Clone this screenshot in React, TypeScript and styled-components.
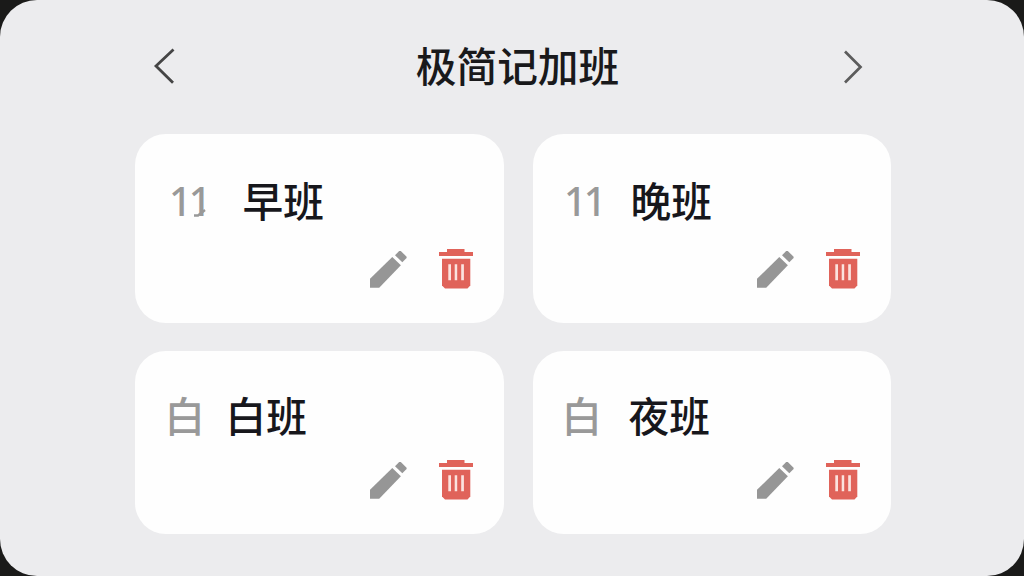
import React from "react";
import styled, { createGlobalStyle } from "styled-components";

const GlobalStyle = createGlobalStyle`
  body {
    margin: 0;
    background-color: #1a1a19;
  }
`;

const Screen = styled.div`
  box-sizing: border-box;
  width: 1024px;
  height: 576px;
  padding: 0 133px 0 135px;
  border-radius: 37px;
  background-color: #ececee;
  font-family: "Noto Sans CJK SC", sans-serif;
  overflow: hidden;
`;

const Header = styled.header`
  height: 134px;
  box-sizing: border-box;
  padding: 0 26px 0 17px;
  display: flex;
  justify-content: space-between;
  align-items: center;
`;

const Title = styled.h1`
  margin: 0 0 4px 18px;
  font-size: 40.7px;
  font-weight: 500;
  line-height: 60px;
  color: #19191b;
`;

const NavButton = styled.button<{ $color: string }>`
  display: flex;
  padding: 0;
  border: none;
  background: none;
  color: ${({ $color }) => $color};
  cursor: pointer;
`;

const Grid = styled.main`
  display: grid;
  grid-template-columns: 369px 358px;
  grid-template-rows: 188.5px 182.5px;
  gap: 28.5px 29px;
`;

const Card = styled.section`
  box-sizing: border-box;
  padding: 36px 31px 34px 31px;
  border-radius: 31px;
  background-color: #fefefe;
  display: flex;
  flex-direction: column;
  justify-content: space-between;
`;

const Shift = styled.div<{ $top: number }>`
  display: flex;
  align-items: center;
  height: 60px;
  margin-top: ${({ $top }) => $top}px;
`;

const Mark = styled.span<{ $width: number; $numeric: boolean; $indent: number }>`
  position: relative;
  width: ${({ $width, $indent }) => $width - $indent}px;
  margin-left: ${({ $indent }) => $indent}px;
  margin-top: ${({ $numeric }) => ($numeric ? 2 : 0)}px;
  flex-shrink: 0;
  white-space: nowrap;
  font-family: ${({ $numeric }) =>
    $numeric ? '"Noto Sans", sans-serif' : '"Noto Sans CJK SC", sans-serif'};
  font-size: ${({ $numeric }) => ($numeric ? 39.5 : 40.5)}px;
  font-weight: 500;
  letter-spacing: ${({ $numeric }) => ($numeric ? -2.8 : 0)}px;
  line-height: 60px;
  color: #999;
`;

const Hook = styled.svg`
  position: absolute;
  left: 23px;
  top: 35px;
`;

const Name = styled.h2`
  margin: 0;
  font-size: 40.7px;
  font-weight: 500;
  line-height: 60px;
  color: #17171c;
`;

const Actions = styled.div`
  display: flex;
  justify-content: flex-end;
  align-items: flex-end;
  gap: 32px;
`;

const ActionButton = styled.button`
  display: flex;
  padding: 0;
  border: none;
  background: none;
  cursor: pointer;
`;

const PencilIcon = () => (
  <svg width="38" height="39.5" viewBox="0 0 38 39.5" fill="#969696">
    <path d="M1 29.8 23.3 7.9 31.9 16.2 10.2 38.8H1Z" />
    <path d="M26 6.3 30.2 2 31.8 2 37.6 7.7 37.6 9 33.3 13.3Z" />
  </svg>
);

const TrashIcon = () => (
  <svg width="34" height="39.5" viewBox="0 0 34 39.5">
    <path fill="#e0635a" d="M8 0H25.5V3H34V7H0V3H8Z" />
    <path fill="#e0635a" d="M3 9.7H31.3V36.5L28.5 39.5H6L3 36.5Z" />
    <path fill="#fbe3df" d="M9.3 15.3H12V31.3H9.3ZM15.7 15.3H18.2V31.3H15.7ZM22.2 15.3H24.9V31.3H22.2Z" />
  </svg>
);

const shifts = [
  { mark: "11", name: "早班", width: 76.5, indent: 3, top: 0, hook: true },
  { mark: "11", name: "晚班", width: 66.5, indent: 0, top: 0 },
  { mark: "白", name: "白班", width: 59.5, indent: -1.5, top: -2.5 },
  { mark: "白", name: "夜班", width: 64.5, indent: -2.5, top: -2.5 },
];

const App = () => (
  <>
    <GlobalStyle />
    <Screen>
      <Header>
        <NavButton $color="#454545" aria-label="prev">
          <svg width="24" height="38" viewBox="0 0 24 38" fill="none" stroke="currentColor" strokeWidth="2.8">
            <path d="M21.5 1.5 4 18 21 34.8" />
          </svg>
        </NavButton>
        <Title>极简记加班</Title>
        <NavButton $color="#5c5c5c" aria-label="next">
          <svg width="24" height="38" viewBox="0 0 24 38" fill="none" stroke="currentColor" strokeWidth="2.7">
            <path d="M4 3.5 19.5 19 4 34.5" />
          </svg>
        </NavButton>
      </Header>
      <Grid>
        {shifts.map(({ mark, name, width, indent, top, hook }) => (
          <Card key={name}>
            <Shift $top={top}>
              <Mark $width={width} $numeric={mark === "11"} $indent={indent}>
                {mark}
                {hook && (
                  <Hook width="14" height="12" viewBox="0 0 14 12" fill="none" stroke="#999" strokeWidth="2.4">
                    <path d="M2 9.5H6L13 4" />
                  </Hook>
                )}
              </Mark>
              <Name>{name}</Name>
            </Shift>
            <Actions>
              <ActionButton aria-label="edit">
                <PencilIcon />
              </ActionButton>
              <ActionButton aria-label="delete">
                <TrashIcon />
              </ActionButton>
            </Actions>
          </Card>
        ))}
      </Grid>
    </Screen>
  </>
);

export default App;
